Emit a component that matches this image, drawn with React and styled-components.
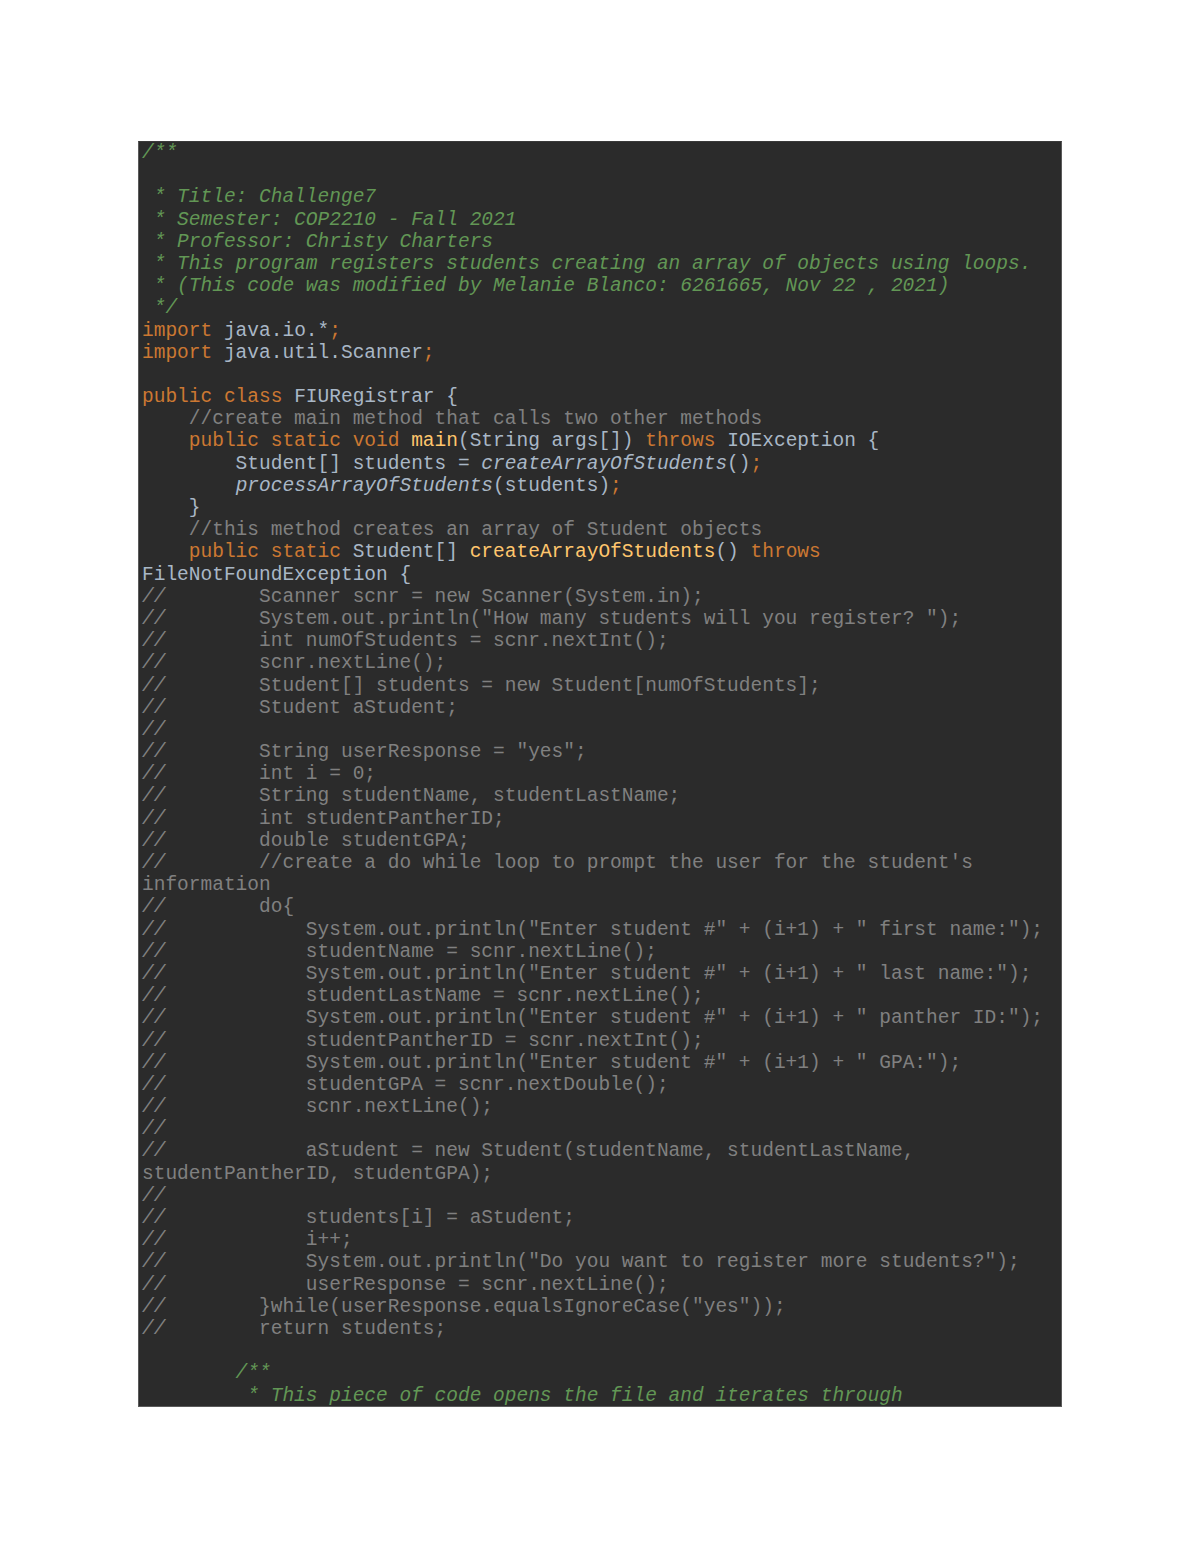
import styled, { createGlobalStyle } from "styled-components";

const GlobalStyle = createGlobalStyle`
  html, body {
    margin: 0;
    padding: 0;
    background: #ffffff;
  }
`;

const Page = styled.div`
  width: 1200px;
  height: 1553px;
  box-sizing: border-box;
  padding: 141px 138px 0;
`;

const CodeBlock = styled.pre`
  margin: 0;
  width: 924px;
  height: 1266px;
  box-sizing: border-box;
  padding: 0 0 0 3px;
  overflow: hidden;
  background: #2b2b2b;
  border: 1px solid #5a5a5a;
  border-top-color: #3a3a3a;
  font-family: "Liberation Mono", "Courier New", monospace;
  font-size: 19.5px;
  line-height: 22.2px;
  color: #a9b7c6;
`;

const Line = styled.div`
  height: 22.2px;
  white-space: pre;
`;

const colors = {
  doc: "#629755",
  kw: "#cc7832",
  txt: "#a9b7c6",
  cmt: "#808080",
  slash: "#808080",
  fn: "#ffc66d",
  call: "#a9b7c6",
};

const italicKinds = ["doc", "slash", "call"];

const Token = styled.span`
  color: ${(p) => colors[p.$kind]};
  font-style: ${(p) => (italicKinds.includes(p.$kind) ? "italic" : "normal")};
`;

// commented-out line: slanted "//" followed by plain grey code
const cl = (code) => [
  ["slash", "//"],
  ["cmt", code],
];

const lines = [
  [["doc", "/**"]],
  [],
  [["doc", " * Title: Challenge7"]],
  [["doc", " * Semester: COP2210 - Fall 2021"]],
  [["doc", " * Professor: Christy Charters"]],
  [["doc", " * This program registers students creating an array of objects using loops."]],
  [["doc", " * (This code was modified by Melanie Blanco: 6261665, Nov 22 , 2021)"]],
  [["doc", " */"]],
  [["kw", "import "], ["txt", "java.io.*"], ["kw", ";"]],
  [["kw", "import "], ["txt", "java.util.Scanner"], ["kw", ";"]],
  [],
  [["kw", "public class "], ["txt", "FIURegistrar {"]],
  [["cmt", "    //create main method that calls two other methods"]],
  [
    ["kw", "    public static void "],
    ["fn", "main"],
    ["txt", "(String args[]) "],
    ["kw", "throws "],
    ["txt", "IOException {"],
  ],
  [
    ["txt", "        Student[] students = "],
    ["call", "createArrayOfStudents"],
    ["txt", "()"],
    ["kw", ";"],
  ],
  [["txt", "        "], ["call", "processArrayOfStudents"], ["txt", "(students)"], ["kw", ";"]],
  [["txt", "    }"]],
  [["cmt", "    //this method creates an array of Student objects"]],
  [
    ["kw", "    public static "],
    ["txt", "Student[] "],
    ["fn", "createArrayOfStudents"],
    ["txt", "() "],
    ["kw", "throws"],
  ],
  [["txt", "FileNotFoundException {"]],
  cl("        Scanner scnr = new Scanner(System.in);"),
  cl('        System.out.println("How many students will you register? ");'),
  cl("        int numOfStudents = scnr.nextInt();"),
  cl("        scnr.nextLine();"),
  cl("        Student[] students = new Student[numOfStudents];"),
  cl("        Student aStudent;"),
  cl(""),
  cl('        String userResponse = "yes";'),
  cl("        int i = 0;"),
  cl("        String studentName, studentLastName;"),
  cl("        int studentPantherID;"),
  cl("        double studentGPA;"),
  cl("        //create a do while loop to prompt the user for the student's"),
  [["cmt", "information"]],
  cl("        do{"),
  cl('            System.out.println("Enter student #" + (i+1) + " first name:");'),
  cl("            studentName = scnr.nextLine();"),
  cl('            System.out.println("Enter student #" + (i+1) + " last name:");'),
  cl("            studentLastName = scnr.nextLine();"),
  cl('            System.out.println("Enter student #" + (i+1) + " panther ID:");'),
  cl("            studentPantherID = scnr.nextInt();"),
  cl('            System.out.println("Enter student #" + (i+1) + " GPA:");'),
  cl("            studentGPA = scnr.nextDouble();"),
  cl("            scnr.nextLine();"),
  cl(""),
  cl("            aStudent = new Student(studentName, studentLastName,"),
  [["cmt", "studentPantherID, studentGPA);"]],
  cl(""),
  cl("            students[i] = aStudent;"),
  cl("            i++;"),
  cl('            System.out.println("Do you want to register more students?");'),
  cl("            userResponse = scnr.nextLine();"),
  cl('        }while(userResponse.equalsIgnoreCase("yes"));'),
  cl("        return students;"),
  [],
  [["doc", "        /**"]],
  [["doc", "         * This piece of code opens the file and iterates through"]],
];

export default function App() {
  return (
    <>
      <GlobalStyle />
      <Page>
        <CodeBlock>
          {lines.map((tokens, i) => (
            <Line key={i}>
              {tokens.map(([kind, text], j) => (
                <Token key={j} $kind={kind}>
                  {text}
                </Token>
              ))}
            </Line>
          ))}
        </CodeBlock>
      </Page>
    </>
  );
}
